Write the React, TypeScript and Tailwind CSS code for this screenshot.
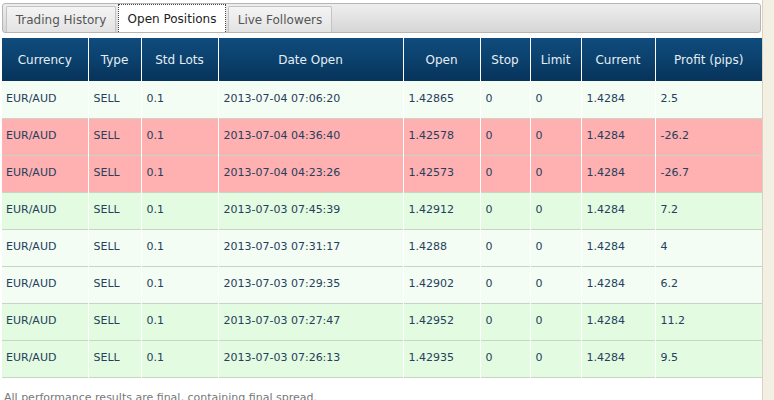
const cols = [86, 53, 77, 185, 77, 50, 51, 74, 107];
const heads = ["Currency", "Type", "Std Lots", "Date Open", "Open", "Stop", "Limit", "Current", "Profit (pips)"];
const rows: [string, string, string, string][] = [
  ["2013-07-04 07:06:20", "1.42865", "2.5", "bg-[#f4fdf3]"],
  ["2013-07-04 04:36:40", "1.42578", "-26.2", "bg-[#ffb0b0]"],
  ["2013-07-04 04:23:26", "1.42573", "-26.7", "bg-[#ffb0b0]"],
  ["2013-07-03 07:45:39", "1.42912", "7.2", "bg-[#e3fbe0]"],
  ["2013-07-03 07:31:17", "1.4288", "4", "bg-[#f4fdf3]"],
  ["2013-07-03 07:29:35", "1.42902", "6.2", "bg-[#f4fdf3]"],
  ["2013-07-03 07:27:47", "1.42952", "11.2", "bg-[#e3fbe0]"],
  ["2013-07-03 07:26:13", "1.42935", "9.5", "bg-[#e3fbe0]"],
];
export default function App() {
  return (
    <div className="w-[774px] h-[400px] bg-white overflow-hidden relative text-[11px] text-[#25405e]" style={{ fontFamily: '"DejaVu Sans", Verdana, sans-serif' }}>
      <div className="absolute right-0 top-0 w-[12px] h-[400px] bg-[#f3efe3] border-l border-[#d8d2bf]" />
      <div className="ml-[2px] mt-[3px] w-[759px] h-[30px] rounded-[3px] border border-[#b5b5b5] bg-gradient-to-b from-[#eeeeee] to-[#d6d6d6] flex items-end pl-[3px] gap-[2px]">
        <div className="h-[26px] w-[110px] flex items-center justify-center text-[#555] bg-gradient-to-b from-[#f4f4f4] to-[#e3e3e3] border border-[#c4c4c4] border-b-0 rounded-t-[2px] text-[12px]">Trading History</div>
        <div className="h-[28px] w-[108px] flex items-center justify-center text-[#222] bg-white border border-dotted border-[#444] border-b-0 text-[12px]">Open Positions</div>
        <div className="h-[26px] w-[104px] flex items-center justify-center text-[#555] bg-gradient-to-b from-[#f4f4f4] to-[#e3e3e3] border border-[#c4c4c4] border-b-0 rounded-t-[2px] text-[12px]">Live Followers</div>
      </div>
      <table className="ml-[2px] mt-[5px] border-collapse table-fixed w-[760px]">
        <colgroup>{cols.map((w, i) => <col key={i} style={{ width: w }} />)}</colgroup>
        <thead>
          <tr className="h-[43px] bg-gradient-to-b from-[#0f4c7d] via-[#0b416d] to-[#07335a] text-[#e6eef5] text-[12px]">
            {heads.map((h, i) => <th key={i} className="font-normal text-center border-l border-white first:border-l-0">{h}</th>)}
          </tr>
        </thead>
        <tbody>
          {rows.map((r, i) => (
            <tr key={i} className={`h-[37px] ${r[3]} border-b border-[#c9d4c6]`}>
              {["EUR/AUD", "SELL", "0.1", r[0], r[1], "0", "0", "1.4284", r[2]].map((c, j) => (
                <td key={j} className={`border-l border-white first:border-l-0 ${j === 0 ? "pl-[4px]" : "pl-[5px]"}`}>{c}</td>
              ))}
            </tr>
          ))}
        </tbody>
      </table>
      <div className="ml-[4px] mt-[12px] text-[11px] text-[#777]">All performance results are final, containing final spread.</div>
    </div>
  );
}
